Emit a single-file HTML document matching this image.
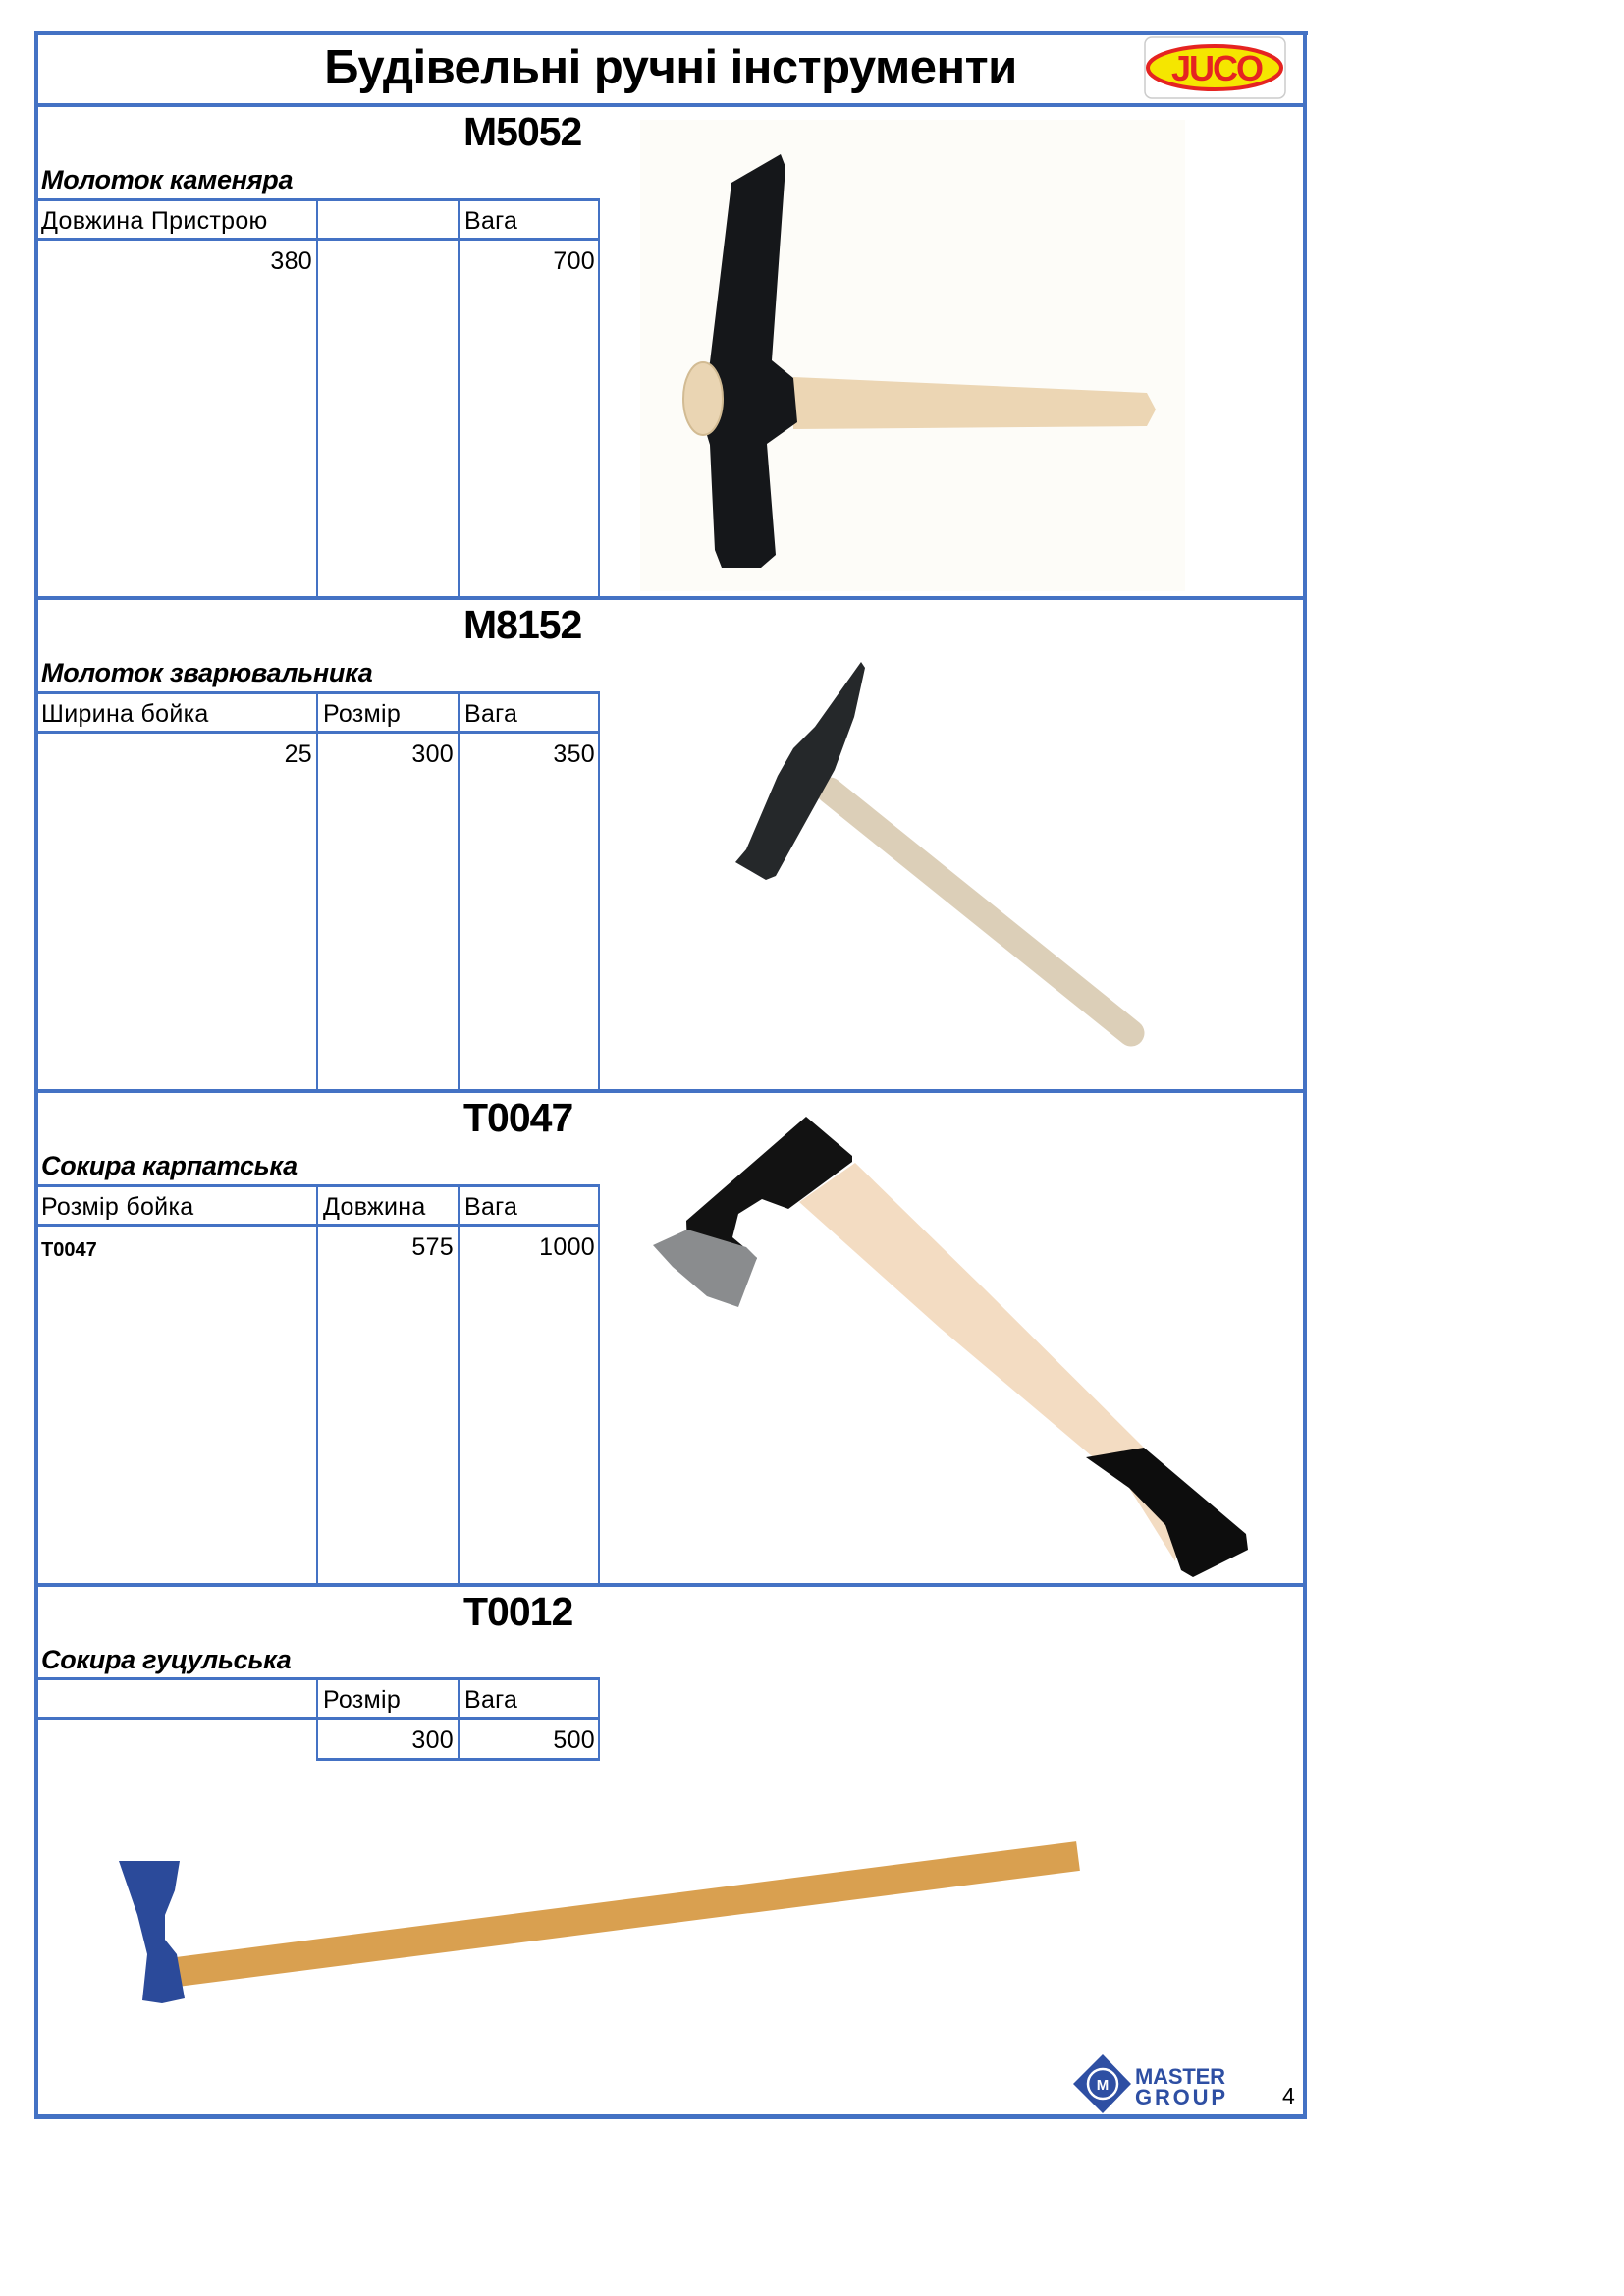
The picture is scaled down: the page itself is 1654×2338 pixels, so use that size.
<!DOCTYPE html>
<html><head><meta charset="utf-8">
<style>
*{margin:0;padding:0;box-sizing:border-box}
body{width:1654px;height:2338px;background:#fff;position:relative;overflow:hidden;font-family:"Liberation Sans","DejaVu Sans",sans-serif;color:#000}
.a{position:absolute}
.hb{position:absolute;background:#4472C4}
.code{position:absolute;left:472px;font-weight:bold;font-size:41px;line-height:40px;letter-spacing:-1px}
.lab{position:absolute;left:42px;font-weight:bold;font-style:italic;font-size:27px;line-height:28px;letter-spacing:-0.3px}
.t{position:absolute;font-size:25px;line-height:26px;letter-spacing:0.3px}
.r{text-align:right}
</style></head><body>

<div class="hb" style="left:35px;top:32px;width:1297px;height:4px"></div>
<div class="hb" style="left:35px;top:32px;width:4px;height:2126px"></div>
<div class="hb" style="left:1327px;top:32px;width:4px;height:2126px"></div>
<div class="hb" style="left:35px;top:2153px;width:1296px;height:5px"></div>
<div class="hb" style="left:35px;top:105px;width:1296px;height:4px"></div>
<div class="hb" style="left:35px;top:607px;width:1296px;height:4px"></div>
<div class="hb" style="left:35px;top:1109px;width:1296px;height:4px"></div>
<div class="hb" style="left:35px;top:1612px;width:1296px;height:4px"></div>

<div class="a" style="left:36px;width:1294px;top:42px;text-align:center;font-weight:bold;font-size:49px;line-height:54px;letter-spacing:-0.5px">Будівельні ручні інструменти</div>

<svg class="a" style="left:1165px;top:37px" width="145" height="64" viewBox="0 0 145 64">
<rect x="1" y="1" width="143" height="62" rx="7" fill="#fff" stroke="#ccc" stroke-width="1.5"/>
<ellipse cx="72" cy="32" rx="68" ry="22" fill="#f5e600" stroke="#e52421" stroke-width="4"/>
<text x="74" y="45" text-anchor="middle" font-family="Liberation Sans" font-weight="bold" font-size="36" fill="#e52421" letter-spacing="-2">JUCO</text>
</svg>

<!-- Section 1 -->
<div class="code" style="top:114px">M5052</div>
<div class="lab" style="top:169px">Молоток каменяра</div>
<div class="hb" style="left:36px;top:202px;width:575px;height:3px"></div>
<div class="hb" style="left:36px;top:242px;width:575px;height:3px"></div>
<div class="hb" style="left:322px;top:202px;width:2px;height:406px"></div>
<div class="hb" style="left:466px;top:202px;width:2px;height:406px"></div>
<div class="hb" style="left:609px;top:202px;width:2px;height:406px"></div>
<div class="t" style="left:42px;top:212px">Довжина Пристрою</div>
<div class="t" style="left:473px;top:212px">Вага</div>
<div class="t r" style="left:220px;width:98px;top:253px">380</div>
<div class="t r" style="left:480px;width:126px;top:253px">700</div>

<!-- Section 2 -->
<div class="code" style="top:616px">M8152</div>
<div class="lab" style="top:671px">Молоток зварювальника</div>
<div class="hb" style="left:36px;top:704px;width:575px;height:3px"></div>
<div class="hb" style="left:36px;top:744px;width:575px;height:3px"></div>
<div class="hb" style="left:322px;top:704px;width:2px;height:406px"></div>
<div class="hb" style="left:466px;top:704px;width:2px;height:406px"></div>
<div class="hb" style="left:609px;top:704px;width:2px;height:406px"></div>
<div class="t" style="left:42px;top:714px">Ширина бойка</div>
<div class="t" style="left:329px;top:714px">Розмір</div>
<div class="t" style="left:473px;top:714px">Вага</div>
<div class="t r" style="left:220px;width:98px;top:755px">25</div>
<div class="t r" style="left:330px;width:132px;top:755px">300</div>
<div class="t r" style="left:480px;width:126px;top:755px">350</div>

<!-- Section 3 -->
<div class="code" style="top:1118px">T0047</div>
<div class="lab" style="top:1173px">Сокира карпатська</div>
<div class="hb" style="left:36px;top:1206px;width:575px;height:3px"></div>
<div class="hb" style="left:36px;top:1246px;width:575px;height:3px"></div>
<div class="hb" style="left:322px;top:1206px;width:2px;height:406px"></div>
<div class="hb" style="left:466px;top:1206px;width:2px;height:406px"></div>
<div class="hb" style="left:609px;top:1206px;width:2px;height:406px"></div>
<div class="t" style="left:42px;top:1216px">Розмір бойка</div>
<div class="t" style="left:329px;top:1216px">Довжина</div>
<div class="t" style="left:473px;top:1216px">Вага</div>
<div class="t" style="left:42px;top:1260px;font-weight:bold;font-size:20px;letter-spacing:0">T0047</div>
<div class="t r" style="left:330px;width:132px;top:1257px">575</div>
<div class="t r" style="left:480px;width:126px;top:1257px">1000</div>

<!-- Section 4 -->
<div class="code" style="top:1621px">T0012</div>
<div class="lab" style="top:1676px">Сокира гуцульська</div>
<div class="hb" style="left:36px;top:1708px;width:575px;height:3px"></div>
<div class="hb" style="left:36px;top:1748px;width:575px;height:3px"></div>
<div class="hb" style="left:322px;top:1790px;width:289px;height:3px"></div>
<div class="hb" style="left:322px;top:1708px;width:2px;height:85px"></div>
<div class="hb" style="left:466px;top:1708px;width:2px;height:85px"></div>
<div class="hb" style="left:609px;top:1708px;width:2px;height:85px"></div>
<div class="t" style="left:329px;top:1718px">Розмір</div>
<div class="t" style="left:473px;top:1718px">Вага</div>
<div class="t r" style="left:330px;width:132px;top:1759px">300</div>
<div class="t r" style="left:480px;width:126px;top:1759px">500</div>

<svg class="a" style="left:0;top:0" width="1654" height="2338" viewBox="0 0 1654 2338">
<rect x="652" y="122" width="555" height="480" fill="#fdfcf8"/>
<polygon points="808,384 1168,400 1177,417 1168,434 808,437" fill="#ecd6b4"/>
<polygon points="795,157 800,170 786,367 808,385 812,430 781,452 790,565 775,578 735,578 728,560 723,453 716,430 716,385 723,369 745,186" fill="#15171a"/>
<ellipse cx="716" cy="406" rx="20" ry="37" fill="#ead5b3" stroke="#d2bb93" stroke-width="2"/>
<line x1="845" y1="805" x2="1152" y2="1052" stroke="#dccfb8" stroke-width="27" stroke-linecap="round"/>
<polygon points="877,674 881,680 870,730 850,784 790,892 780,896 749,878 760,865 792,790 808,762 830,740" fill="#25282a"/>
<polygon points="871,1184 1000,1310 1165,1474 1205,1520 1197,1590 1150,1515 957,1352 814,1224" fill="#f3dcc2"/>
<polygon points="1106,1484 1165,1474 1269,1562 1271,1578 1215,1606 1203,1599 1187,1553 1150,1515" fill="#0d0d0d"/>
<polygon points="821,1137 868,1177 868,1183 803,1231 776,1221 752,1236 746,1260 771,1281 760,1305 700,1270 699,1243" fill="#121212"/>
<polygon points="665,1268 700,1252 760,1270 771,1281 752,1331 720,1320 685,1290" fill="#8a8c8e"/>
<line x1="180" y1="2008" x2="1098" y2="1890" stroke="#d9a050" stroke-width="30"/>
<polygon points="121,1895 183,1895 178,1925 168,1950 168,1975 180,1990 188,2035 165,2040 145,2037 150,1990 140,1950" fill="#2b4a9a"/>
<polygon points="1123,2092 1152,2122 1123,2152 1093,2122" fill="#2e4fa3"/>
<circle cx="1123" cy="2122" r="15" fill="none" stroke="#fff" stroke-width="2.5"/>
<text x="1123" y="2128" text-anchor="middle" font-family="Liberation Sans" font-weight="bold" font-size="15" fill="#fff">M</text>
<text x="1156" y="2122" font-family="Liberation Sans" font-weight="bold" font-size="22" fill="#2e4fa3" textLength="92">MASTER</text>
<text x="1156" y="2143" font-family="Liberation Sans" font-weight="bold" font-size="22" fill="#2e4fa3" textLength="92">GROUP</text>
<text x="1306" y="2142" font-family="Liberation Sans" font-size="23" fill="#000">4</text>
</svg>
</body></html>
